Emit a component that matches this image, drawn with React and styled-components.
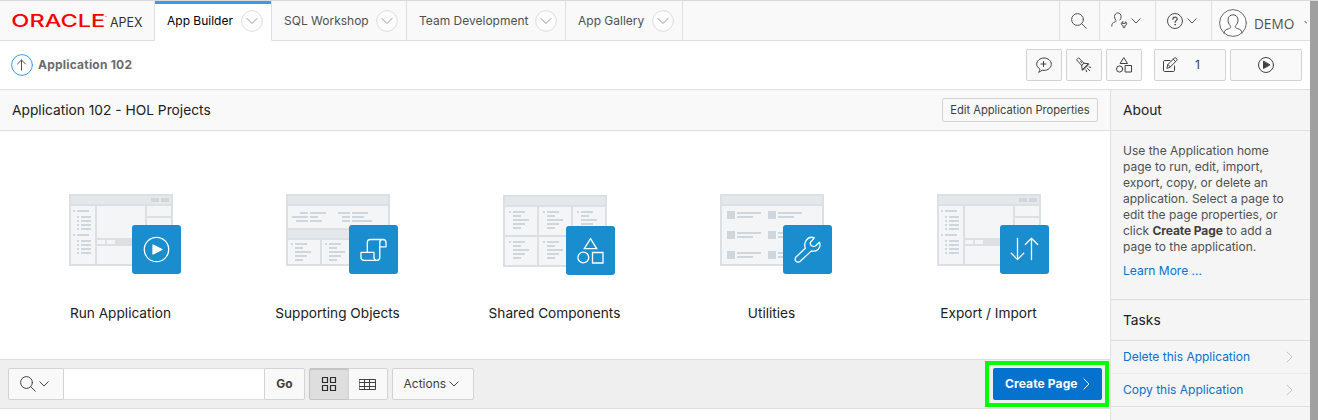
import React from "react";
import styled, { createGlobalStyle, css } from "styled-components";

const GlobalStyle = createGlobalStyle`
  *, *::before, *::after { box-sizing: border-box; }
  body {
    margin: 0;
    background: #fff;
    color: #404040;
    font-family: Inter, "Liberation Sans", sans-serif;
    font-size: 12px;
    line-height: 16px;
    overflow: hidden;
  }
  svg { display: block; flex: none; }
`;

const LINE = "#dfdfe1";

const Shell = styled.div`
  display: flex;
  width: 1318px;
  height: 420px;
  overflow: hidden;
  border-top: 1px solid #d9d9de;
`;
const Page = styled.div`
  width: 1310px;
  display: flex;
  flex-direction: column;
`;
const Scrollbar = styled.div`
  width: 8px;
  background: #a0a0a0;
`;

/* Header */
const Header = styled.header`
  display: flex;
  height: 40px;
  flex: none;
  background: #f9f9f9;
`;
const Brand = styled.div`
  width: 155px;
  padding: 10px 0 0 12px;
  border-right: 1px solid ${LINE};
  border-bottom: 1px solid ${LINE};
`;
const Tab = styled.div`
  display: flex;
  align-items: center;
  justify-content: space-between;
  width: ${(p) => p.$w}px;
  padding: 0 8px 0 12px;
  border-right: 1px solid ${LINE};
  border-bottom: 1px solid ${LINE};
  color: #505050;
  white-space: nowrap;
  ${(p) =>
    p.$active &&
    css`
      background: #fff;
      color: #000;
      border-bottom-color: #fff;
      box-shadow: inset 0 3px 0 #3a9bea;
    `}
`;
const Spacer = styled.div`
  flex: 1;
  border-bottom: ${(p) => (p.$line ? `1px solid ${LINE}` : "0")};
`;
const HeaderCell = styled.div`
  display: flex;
  align-items: center;
  gap: ${(p) => p.$gap || 0}px;
  width: ${(p) => p.$w}px;
  border-left: 1px solid ${LINE};
  border-bottom: 1px solid ${LINE};
  padding-left: ${(p) => p.$pl || 0}px;
  padding-top: ${(p) => p.$pt || 0}px;
  overflow: hidden;
`;
const UserName = styled.span`
  font-family: "Open Sans", "Noto Sans", sans-serif;
  font-size: 13.6px;
  color: #505050;
  padding: 1px 0 0 1px;
  width: 45px;
  flex: none;
`;

/* Breadcrumb bar */
const Crumbs = styled.div`
  display: flex;
  align-items: center;
  height: 49px;
  flex: none;
  padding: 0 8px 0 11px;
  border-bottom: 1px solid ${LINE};
`;
const CrumbText = styled.span`
  margin-left: 5px;
  font-weight: 700;
  letter-spacing: 0.22px;
  color: #6b6b6b;
`;
const Actions = styled.div`
  display: flex;
  gap: 4px;
`;
const Button = styled.div`
  display: flex;
  align-items: center;
  justify-content: ${(p) => (p.$pl ? "flex-start" : "center")};
  gap: ${(p) => p.$gap || 0}px;
  width: ${(p) => p.$w}px;
  height: ${(p) => p.$h || 32}px;
  padding-left: ${(p) => p.$pl || 0}px;
  margin-left: ${(p) => p.$ml || 0}px;
  border: 1px solid #d3d3d3;
  border-radius: ${(p) => p.$radius || "2px"};
  background: #f9f9f9;
  color: #404040;
  font-size: ${(p) => p.$size || 12}px;
  font-weight: ${(p) => (p.$bold ? 700 : 400)};
  white-space: nowrap;
  ${(p) =>
    p.$pressed &&
    css`
      background: #dedede;
      border-color: #c4c4c4;
      box-shadow: inset 0 1px 1px rgba(0, 0, 0, 0.12);
    `}
`;

/* Body */
const Body = styled.div`
  display: flex;
  flex: 1;
`;
const Main = styled.main`
  width: 1110px;
  display: flex;
  flex-direction: column;
`;
const TitleBar = styled.div`
  display: flex;
  align-items: center;
  justify-content: space-between;
  height: 41px;
  padding: 0 12px;
  background: #f9f9f9;
  border-bottom: 1px solid ${LINE};
`;
const Title = styled.h1`
  margin: 0;
  font-size: 13.75px;
  font-weight: 400;
  color: #202020;
`;
const Tiles = styled.div`
  display: flex;
  height: 228px;
  padding: 63px 12px 0;
`;
const Tile = styled.div`
  width: 217px;
  display: flex;
  flex-direction: column;
  align-items: center;
`;
const TileArt = styled.div`
  padding: ${(p) => (p.$low ? "1px 0 0 9px" : "0 0 1px 9px")};
`;
const TileLabel = styled.div`
  margin-top: 30px;
  font-size: 13.65px;
  color: #202020;
`;
const Toolbar = styled.div`
  display: flex;
  align-items: center;
  height: 50px;
  padding: 0 1px 0 8px;
  background: #efefef;
  border-top: 1px solid ${LINE};
  border-bottom: 1px solid ${LINE};
`;
const SearchInput = styled.input`
  width: 200px;
  height: 32px;
  border: 1px solid ${LINE};
  border-width: 1px 0;
  background: #fff;
  outline: 0;
  padding: 0 8px;
`;
const Highlight = styled.div`
  display: flex;
  width: 124px;
  height: 46px;
  border: 4px solid #00ff00;
  padding: 3px 3px 3px 4px;
`;
const Primary = styled.div`
  display: flex;
  align-items: center;
  gap: 5px;
  width: 109px;
  height: 32px;
  padding-left: 12px;
  border-radius: 2px;
  background: #0572ce;
  color: #fff;
  font-weight: 700;
  letter-spacing: 0.12px;
  white-space: nowrap;
`;

/* Sidebar */
const Sidebar = styled.aside`
  width: 200px;
  border-left: 1px solid ${LINE};
  background: #f5f5f5;
`;
const SideTitle = styled.div`
  display: flex;
  align-items: center;
  height: 41px;
  padding-left: 12px;
  border-bottom: 1px solid ${LINE};
`;
const About = styled.div`
  height: 169px;
  padding: 12px 0 0 12px;
  border-bottom: 1px solid ${LINE};
  color: #505050;
  white-space: nowrap;
`;
const AboutLine = styled.div`
  b { font-weight: 700; color: #404040; letter-spacing: -0.1px; }
`;
const Link = styled.div`
  color: #0572ce;
  margin-top: ${(p) => p.$mt || 0}px;
`;
const Task = styled.div`
  display: flex;
  align-items: center;
  justify-content: space-between;
  height: 33px;
  padding: 0 17px 0 12px;
  border-bottom: 1px solid ${(p) => (p.$last ? LINE : "#ebebeb")};
`;

/* Icons */
const Icon = ({ w = 16, h = 16, color = "#404040", sw = 1, children }) => (
  <svg width={w} height={h} viewBox={`0 0 ${w} ${h}`} fill="none" stroke={color} strokeWidth={sw} strokeLinecap="round" strokeLinejoin="round">
    {children}
  </svg>
);
const Caret = ({ color = "#505050" }) => (
  <Icon w={10} h={6} color={color}><path d="M.8 .8L5 5 9.200 .8" /></Icon>
);
const RoundCaret = () => (
  <Icon w={22} h={22} color="#dedede">
    <circle cx="11" cy="11" r="10.4" fill="#fcfcfc" />
    <path d="M6 8.500l5 5 5-5" stroke="#9b9b9b" />
  </Icon>
);
const Chevron = ({ color, w = 7, h = 12 }) => (
  <Icon w={w} h={h} color={color}><path d={`M1 1l${w - 2} ${h / 2 - 1}-${w - 2} ${h / 2 - 1}`} /></Icon>
);
const SearchIcon = ({ color = "#505050" }) => (
  <Icon color={color}>
    <circle cx="6.5" cy="6.5" r="5.9" />
    <path d="M10.8 10.8l4.5 4.5" />
  </Icon>
);
const UserWrench = () => (
  <Icon w={17} h={17} color="#505050">
    <path d="M.8 14.200c-.2-2.500.8-3.600 3.300-4.300 1-.3 1.200-1 .7-1.700C4 7.300 3.500 6 3.500 4.700 3.500 2.400 4.900.9 6.800.9s3.300 1.500 3.300 3.800c0 1.300-.4 2.400-1.100 3.300" />
    <path d="M11.700 9.800c-1.500.5-1.900 2.100-.9 3.100.4.400.9.600 1.300.7v1.500c0 1 1.800 1 1.800 0v-1.500c.4-.1.900-.3 1.300-.7 1-1 .6-2.600-.9-3.100v1.600h-2.600z" />
  </Icon>
);
const HelpIcon = () => (
  <Icon color="#505050">
    <circle cx="8" cy="8" r="7.5" />
    <path d="M5.900 6.300c0-2.800 4.300-2.800 4.300-.2 0 1.400-2.100 1.600-2.100 3.300" strokeWidth="1.2" />
    <circle cx="8.100" cy="11.700" r=".4" fill="#505050" />
  </Icon>
);
const Avatar = () => (
  <Icon w={28} h={28} color="#505050">
    <circle cx="14" cy="14" r="13.400" fill="#fff" stroke="#6a6a6a" />
    <path d="M5 24.200c.3-3 1.700-3.600 4.500-4.400 2.700-.8 2.500-2 1.700-3C9.800 15 9 13 9 10.800 9 7.700 11.200 5.800 14 5.800s5 1.900 5 5c0 2.200-.8 4.200-2.200 5.800-.8 1-1 2.200 1.700 3 2.800.8 4.200 1.400 4.500 4.400" />
  </Icon>
);
const UpIcon = () => (
  <Icon w={22} h={22} color="#3a9bea">
    <circle cx="11" cy="11" r="10.4" />
    <path d="M10.500 16V6M6.500 10l4-4 4 4" stroke="#505050" />
  </Icon>
);
const CommentPlus = () => (
  <Icon>
    <path d="M3 15c.7-.9.9-2 .7-3.200C1.800 10.700.7 9.100.7 7.200.7 3.700 4 1 8 1s7.300 2.700 7.300 6.200-3.300 6.200-7.300 6.200c-.7 0-1.300-.1-1.900-.2C5.300 14.200 4.200 14.800 3 15z" />
    <path d="M7.500 4.500v5M5 7h5" />
  </Icon>
);
const Flashlight = () => (
  <Icon>
    <path d="M.8 2.600L2.600.8 8 6.200l4.200.5.5.8-5.700 5.800-.8-.5-.6-4.200z" />
    <path d="M12.200 6.700l-6 6.100M5.600 8.600L8 6.200M4.600 4.600l1.300 1.300" />
    <path d="M10 13l.6 1.700M11.500 11.500l2.200 2.200M13 9.900l1.800.6" />
  </Icon>
);
const Shapes = () => (
  <Icon>
    <path d="M8 .9l3.500 5.600h-7z" strokeLinejoin="miter" />
    <circle cx="3.600" cy="12" r="3.100" />
    <path d="M9.500 8.500h6v6.500h-6z" strokeLinejoin="miter" />
  </Icon>
);
const EditIcon = () => (
  <Icon>
    <path d="M8 3.500H2.700c-.7 0-1.200.5-1.200 1.200v8.600c0 .7.500 1.200 1.200 1.200h8.600c.7 0 1.200-.5 1.200-1.200V9" />
    <path d="M5 11l.8-3.400 6.600-6.600c1-1 3.400 1.400 2.400 2.400L8.300 10zM11.200 2.200l2.400 2.400M6 7.600l2.300 2.300" />
  </Icon>
);
const PlayIcon = () => (
  <Icon>
    <circle cx="8" cy="8" r="7.5" />
    <path d="M5.500 4.500v7L11.700 8z" fill="#404040" />
  </Icon>
);
const GridIcon = () => (
  <Icon color="#2a2a2a" sw={1.2}>
    <path d="M1.500 1.500h5v5h-5zM9.500 1.500h5v5h-5zM1.500 9.500h5v5h-5zM9.500 9.500h5v5h-5z" />
  </Icon>
);
const TableIcon = () => (
  <Icon w={17} h={11}>
    <path d="M.5.500h16v10H.5zM.5 3.500h16M.5 7.500h16M5.500.500v10M10.500.500v10" strokeLinejoin="miter" />
  </Icon>
);

/* Tile illustrations */
const INK = "#cfd6dc";
const EDGE = "#dae0e4";
const Bar = ({ x, y, w, h = 2, c = INK }) => <rect x={x} y={y} width={w} height={h} fill={c} />;
const ListBlock = ({ x, y }) => (
  <g>
    <Bar x={x} y={y} w={2} />
    {[12, 8, 16, 12, 8].map((w, i) => <Bar key={i} x={x + 4} y={y + i * 4} w={w} />)}
  </g>
);
const WindowArt = () => (
  <g>
    <Bar x={82} y={4} w={8} h={4} />
    <Bar x={92} y={4} w={8} h={4} />
    <Bar x={26} y={12} w={2} h={58} c={EDGE} />
    <Bar x={76} y={12} w={2} h={32} c={EDGE} />
    <Bar x={78} y={22} w={24} c={EDGE} />
    <Bar x={28} y={44} w={50} h={8} c={EDGE} />
    <Bar x={28} y={46} w={8} h={4} c="#f3f5f7" />
    <Bar x={38} y={46} w={8} h={4} c="#f3f5f7" />
    {[16, 40].map((y) => (
      <g key={y}>
        <Bar x={4} y={y} w={2} />
        <Bar x={8} y={y} w={12} />
        {[6, 10, 14, 18].map((d) => (
          <g key={d}>
            <Bar x={8} y={y + d} w={2} />
            <Bar x={12} y={y + d} w={10} />
          </g>
        ))}
      </g>
    ))}
  </g>
);
const ReportArt = () => (
  <g>
    {[[18, 14, 8, 16, 52, 12, 16], [22, 6, 16, 8, 56, 8, 12], [26, 10, 12, 12, 56, 8, 20]].map(([y, a, aw, bw, c, cw, dw]) => (
      <g key={y}>
        <Bar x={a} y={y} w={aw} />
        <Bar x={24} y={y} w={bw} />
        <Bar x={c} y={y} w={cw} />
        <Bar x={66} y={y} w={dw} />
      </g>
    ))}
    <Bar x={2} y={34} w={100} h={12} c={EDGE} />
    <Bar x={2} y={36} w={100} h={8} c="#e4e8eb" />
    <Bar x={34} y={46} w={2} h={24} c={EDGE} />
    <ListBlock x={5} y={49} />
    <ListBlock x={39} y={49} />
  </g>
);
const CellsArt = () => (
  <g>
    <Bar x={2} y={40} w={100} c={EDGE} />
    <Bar x={34} y={12} w={2} h={58} c={EDGE} />
    <Bar x={68} y={12} w={2} h={58} c={EDGE} />
    {[6, 40, 74].map((x) => <ListBlock key={x} x={x} y={16} />)}
    {[6, 40].map((x) => <ListBlock key={x} x={x} y={46} />)}
  </g>
);
const CardsArt = () => (
  <g>
    {[17, 37, 57].map((y) => [7, 48].map((x) => (
      <g key={`${x}-${y}`}>
        <Bar x={x} y={y} w={8} h={8} />
        <Bar x={x + 10} y={y + 1} w={24} />
        <Bar x={x + 10} y={y + 5} w={16} />
      </g>
    )))}
  </g>
);
const Art = ({ background, children }) => (
  <svg width="112" height="80" viewBox="0 0 112 80">
    <rect width="104" height="72" fill={EDGE} />
    <rect x="2" y="2" width="100" height="8" fill="#e4e8eb" />
    <rect x="2" y="12" width="100" height="58" fill="#f3f5f7" />
    {background}
    <rect x="63" y="31" width="49" height="49" rx="3" fill="#198dce" />
    <g transform="translate(63 31)" fill="none" stroke="#fff" strokeWidth="1.3" strokeLinecap="round" strokeLinejoin="round">
      {children}
    </g>
  </svg>
);

const TILES = [
  {
    label: "Run Application", art: <WindowArt />,
    icon: <><circle cx="24.5" cy="24.5" r="12.200" /><path d="M21 20v9l9-4.500z" fill="#fff" /></>,
  },
  {
    label: "Supporting Objects", art: <ReportArt />,
    icon: <><path d="M18.300 27.300V17.500c0-2 1.200-3 3-3h12.500c2 0 3.200 1.200 3.200 3v4.300h-6.200M33.800 14.500c-2 0-3 1.200-3 3v14.800c0 2-1 3-2.900 3s-2.900-1-2.900-3v-5H12v5c0 2 1 3 3 3h12.900" /></>,
  },
  {
    label: "Shared Components", low: true, art: <CellsArt />,
    icon: <><path d="M24.500 12.700l6.200 10H18.300z" strokeLinejoin="miter" /><circle cx="17.300" cy="31.500" r="5.400" /><path d="M26.500 26.500H37V37H26.500z" strokeLinejoin="miter" /></>,
  },
  {
    label: "Utilities", art: <CardsArt />,
    icon: <path d="M31.300 12.900l-4 4.600c-.3 1 .6 3.100 1.600 3.500 1 .4 2.500.5 3.500 0l4-3.800c1.200 2.400.4 5.600-1.400 7.200-1.700 1.500-4 2-6.600 1.500L17.300 36.300c-1.200 1.200-3.200 1.200-4.300 0-1.200-1.100-1.200-3.100 0-4.300l9.300-8.800c-.9-2.600-.7-5.700.9-7.900 1.900-2.600 5.300-3.600 8.100-2.400z" />,
  },
  {
    label: "Export / Import", art: <WindowArt />,
    icon: <path d="M17.500 13.300v21.200M11.300 28.300l6.200 6.200 6.200-6.200M31.500 34.500V13.300M25.300 19.500l6.200-6.200 6.200 6.200" />,
  },
];

const TABS = [
  { label: "App Builder", w: 117, active: true },
  { label: "SQL Workshop", w: 135 },
  { label: "Team Development", w: 159 },
  { label: "App Gallery", w: 117 },
];

export default function App() {
  return (
    <>
      <GlobalStyle />
      <Shell>
        <Page>
          <Header>
            <Brand>
              <svg width="135" height="20" viewBox="0 0 135 20">
                <text x="-.7" y="16.200" fill="#f80000" fontFamily="Inter, sans-serif" fontSize="17" fontWeight="500" textLength="94" lengthAdjust="spacingAndGlyphs">ORACLE</text>
                <circle cx="94" cy="5.500" r=".8" fill="#f88" />
                <text x="98" y="16" fill="#303030" fontFamily="Inter, sans-serif" fontSize="12.800" textLength="32.500" lengthAdjust="spacingAndGlyphs">APEX</text>
              </svg>
            </Brand>
            {TABS.map((t) => (
              <Tab key={t.label} $w={t.w} $active={t.active}>
                {t.label}
                <RoundCaret />
              </Tab>
            ))}
            <Spacer $line />
            <HeaderCell $w={40} $pl={11}><SearchIcon /></HeaderCell>
            <HeaderCell $w={56} $gap={3} $pl={11}><UserWrench /><Caret /></HeaderCell>
            <HeaderCell $w={56} $gap={4} $pl={11}><HelpIcon /><Caret /></HeaderCell>
            <HeaderCell $w={99} $gap={6} $pl={7} $pt={5}>
              <Avatar />
              <UserName>DEMO</UserName>
              <Icon w={3} h={6} color="#505050"><path d="M.8 1.200L3 3.400" /></Icon>
            </HeaderCell>
          </Header>
          <Crumbs>
            <UpIcon />
            <CrumbText>Application 102</CrumbText>
            <Spacer />
            <Actions>
              <Button $w={36} $pl={9}><CommentPlus /></Button>
              <Button $w={36}><Flashlight /></Button>
              <Button $w={36}><Shapes /></Button>
              <Button $w={72} $ml={8} $pl={7} $gap={17}><EditIcon />1</Button>
              <Button $w={72}><PlayIcon /></Button>
            </Actions>
          </Crumbs>
          <Body>
            <Main>
              <TitleBar>
                <Title>Application 102 - HOL Projects</Title>
                <Button $w={156} $h={24} $size={11.15}>Edit Application Properties</Button>
              </TitleBar>
              <Tiles>
                {TILES.map((t) => (
                  <Tile key={t.label}>
                    <TileArt $low={t.low}><Art background={t.art}>{t.icon}</Art></TileArt>
                    <TileLabel>{t.label}</TileLabel>
                  </Tile>
                ))}
              </Tiles>
              <Toolbar>
                <Button $w={56} $gap={3} $pl={11} $radius="2px 0 0 2px"><SearchIcon color="#404040" /><Caret color="#404040" /></Button>
                <SearchInput />
                <Button $w={41} $bold $radius="0 2px 2px 0">Go</Button>
                <Button $w={40} $ml={4} $pressed $radius="2px 0 0 2px"><GridIcon /></Button>
                <Button $w={40} $ml={-1} $pl={10} $radius="0 2px 2px 0"><TableIcon /></Button>
                <Button $w={82} $ml={4} $pl={10.5} $gap={3}>Actions<Caret color="#404040" /></Button>
                <Spacer />
                <Highlight>
                  <Primary>Create Page<Chevron color="#fff" /></Primary>
                </Highlight>
              </Toolbar>
            </Main>
            <Sidebar>
              <SideTitle><Title as="h2">About</Title></SideTitle>
              <About>
                <AboutLine>Use the Application home</AboutLine>
                <AboutLine>page to run, edit, import,</AboutLine>
                <AboutLine>export, copy, or delete an</AboutLine>
                <AboutLine>application. Select a page to</AboutLine>
                <AboutLine>edit the page properties, or</AboutLine>
                <AboutLine>click <b>Create Page</b> to add a</AboutLine>
                <AboutLine>page to the application.</AboutLine>
                <Link $mt={8}>Learn More ...</Link>
              </About>
              <SideTitle><Title as="h2">Tasks</Title></SideTitle>
              <Task><Link>Delete this Application</Link><Chevron color="#c4c4c4" /></Task>
              <Task $last><Link>Copy this Application</Link><Chevron color="#c4c4c4" /></Task>
            </Sidebar>
          </Body>
        </Page>
        <Scrollbar />
      </Shell>
    </>
  );
}
